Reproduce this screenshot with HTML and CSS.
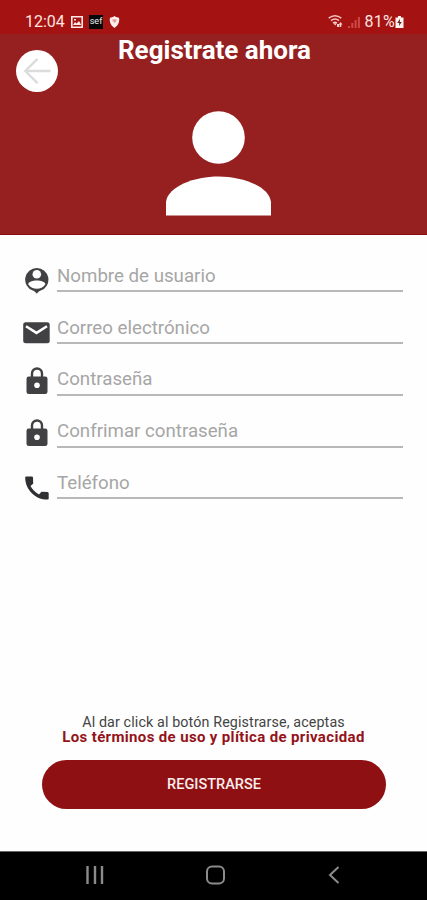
FILE: index.html
```html
<!DOCTYPE html>
<html lang="es">
<head>
<meta charset="utf-8">
<title>Registrate ahora</title>
<link rel="stylesheet" href="styles.css">
</head>
<body>
<div class="screen">
  <div class="status">
    <span class="clock">12:04</span>
    <svg class="s-img" width="12" height="12" viewBox="0 0 12 12"><path fill="none" stroke="#ffe9e6" stroke-width="1.6" d="M.8.8h10.4v10.4H.8z"/><path fill="#ffe9e6" d="M2 9l2-3 1.5 1.5L8 5l2.2 4zM3 3h2v1.6H3z"/></svg>
    <span class="s-app">sef</span>
    <svg class="s-shield" width="11" height="12" viewBox="0 0 11 12"><path fill="#ffeeeb" d="M5.500 0L7 1l3 .8c.8 3-.2 7.500-4.500 10.200C1.200 9.300.2 4.800 1 1.800L4 1z"/><path fill="#a51212" d="M3.600 3.200h3.800v2L5.500 7 3.600 5.200z" opacity=".35"/></svg>
    <span class="gap"></span>
    <svg class="s-wifi" width="16" height="13" viewBox="0 0 16 13"><g fill="none" stroke="#f5c9c4" stroke-width="1.500"><path d="M.7 3.200Q7 -1.500 13.300 3.200M3 5.600q4-3 8 0M5 8q2-1.600 4 0"/></g><path fill="#f5d5d0" d="M5.300 8.300h3.500L7.200 10.500zM9 9h2.200v3H9zM12.500 7l2 2.500h-1.200V12h-1.500V9.500h-1z"/></svg>
    <svg class="s-signal" width="12" height="12" viewBox="0 0 12 12"><path fill="#cb4a45" d="M0 10h2v2H0zM3.300 7h2v5h-2zM6.600 4h2v8h-2zM9.900 1h2v11h-2z"/></svg>
    <span class="pct">81%</span>
    <svg class="s-bat" width="9" height="12" viewBox="0 0 9 12"><path fill="#fff1ee" d="M3 0h3v1.500h2.500V12H.5V1.500H3z"/><path fill="#5d2525" d="M5 2.800L2.200 7h2L4 10l2.800-4h-2z"/></svg>
  </div>
  <header class="head">
    <div class="back"><svg width="42" height="42" viewBox="0 0 42 42"><path fill="none" stroke="#dcdcdc" stroke-width="2.400" d="M34.500 21H9.500M21.500 8.800L9.300 21l12.200 12.200"/></svg></div>
    <h1>Registrate ahora</h1>
    <svg class="avatar" width="105" height="105" viewBox="0 0 105 105"><circle cx="52.500" cy="26.500" r="26.300" fill="#fff"/><path fill="#fff" d="M0 104.500V91C2 75 29 65.500 52.500 65.500S103 75 105 91v13.500z"/></svg>
  </header>
  <main class="form">
    <div class="row"><div class="icon"><svg width="26" height="28" viewBox="0 0 26 28"><path fill="#414143" d="M12.800 1a11.600 11.600 0 0 0-4 22.500c1.700.7 2.500 1.500 4 3.300 1.500-1.800 2.300-2.600 4-3.300A11.600 11.600 0 0 0 12.800 1z"/><circle cx="12.800" cy="7.300" r="4.300" fill="#fff"/><path fill="#fff" d="M4.200 17.200c.8-5 16.400-5 17.200 0-3.800 6-13.400 6-17.200 0z"/></svg></div><div class="field">Nombre de usuario</div></div>
    <div class="row"><div class="icon mail"><svg width="27" height="22" viewBox="0 0 27 22"><rect width="26.500" height="21" x=".2" y=".2" rx="2.500" fill="#414143"/><path d="M3 4.300l10.500 6.600L24 4.300" fill="none" stroke="#fff" stroke-width="2.500"/></svg></div><div class="field">Correo electrónico</div></div>
    <div class="row"><div class="icon lock"><svg width="22" height="28" viewBox="0 0 22 28"><path d="M6 11V6.500a5 5 0 0 1 10 0V11" fill="none" stroke="#414143" stroke-width="2.400"/><rect x=".5" y="9.500" width="21" height="17.500" rx="2.300" fill="#414143"/><circle cx="11" cy="18.300" r="2.800" fill="#fff"/></svg></div><div class="field">Contraseña</div></div>
    <div class="row"><div class="icon lock"><svg width="22" height="28" viewBox="0 0 22 28"><path d="M6 11V6.500a5 5 0 0 1 10 0V11" fill="none" stroke="#414143" stroke-width="2.400"/><rect x=".5" y="9.500" width="21" height="17.500" rx="2.300" fill="#414143"/><circle cx="11" cy="18.300" r="2.800" fill="#fff"/></svg></div><div class="field">Confrimar contraseña</div></div>
    <div class="row"><div class="icon phone"><svg width="24" height="24" viewBox="0 0 24 24"><path fill="#303032" d="M1.300.5h5.500c.7 0 1.100.4 1.200 1.100l.2 5.300c0 .5-.1.900-.4 1.200L5.500 10c1.800 3.700 4.800 6.500 8.500 8.400l2-2.200c.3-.3.700-.4 1.200-.4l5.400.3c.7.1 1.100.5 1.100 1.200v5.100c0 .7-.5 1.200-1.200 1.200C10 23.600.3 13.500.2 1.700.2 1 .6.5 1.300.5z"/></svg></div><div class="field">Teléfono</div></div>
  </main>
  <footer class="foot">
    <p class="note">Al dar click al botón Registrarse, aceptas</p>
    <p class="terms">Los términos de uso y plítica de privacidad</p>
    <div class="btn">REGISTRARSE</div>
  </footer>
  <nav class="nav">
    <svg width="19" height="18" viewBox="0 0 19 18"><path stroke="#8b8b8b" stroke-width="2.400" d="M2.500 0v18M10 0v18M17 0v18"/></svg>
    <svg width="20" height="20" viewBox="0 0 20 20"><rect x="1" y="1.500" width="17" height="17" rx="5" fill="none" stroke="#8b8b8b" stroke-width="2"/></svg>
    <svg width="12" height="18" viewBox="0 0 12 18"><path d="M10.500 1L2 9l8.500 8" fill="none" stroke="#8b8b8b" stroke-width="2"/></svg>
  </nav>
</div>
</body>
</html>
```
FILE: styles.css
```css
* { box-sizing: border-box; }
body { margin: 0; background: #fff; font-family: Roboto, sans-serif; }
svg { display: block; flex: none; }
p, h1 { margin: 0; white-space: nowrap; }
.screen { width: 427px; height: 900px; display: flex; flex-direction: column; overflow: hidden; background: #fefefe; }
.status { height: 34px; flex: none; background: #a51212; color: #ffe4e0; display: flex; align-items: center; padding: 9px 23px 0 25px; font-size: 16px; line-height: 18px; }
.clock { width: 46px; }
.s-app { width: 14px; height: 14px; margin: 0 0 0 6px; background: #080808; color: #eee; font-size: 9px; line-height: 13px; text-align: center; }
.s-shield { margin-left: 6px; }
.gap { flex: 1; }
.s-signal { margin: 0 4px 0 4px; }
.pct { letter-spacing: .3px; }
.s-bat { margin-left: 0; }
.head { height: 200.5px; flex: none; background: #962020; border-bottom: 1px solid #8a0c10; color: #fff; display: grid; grid-template-columns: 58px 1fr 58px; grid-template-rows: 77px 1fr; }
.back { width: 42px; height: 42px; margin: 16px 0 0 16px; border-radius: 50%; background: #fff; }
h1 { text-align: center; font-size: 26px; line-height: 32px; font-weight: 700; padding-left: 2px; }
.avatar { grid-column: 1 / 4; justify-self: center; margin-left: 10px; }
.form { flex: 1; padding: 6px 24px 0 23px; }
.row { height: 51.8px; display: flex; }
.icon { width: 34px; flex: none; padding: 26px 0 0 1px; }
.mail { padding: 29.5px 0 0 0; }
.lock { padding: 23px 0 0 3px; }
.phone { padding: 28px 0 0 2px; }
.field { flex: 1; border-bottom: 2px solid #b8b8b8; color: #a6a6a6; font-size: 18.7px; line-height: 22px; padding-top: 24.3px; white-space: nowrap; }
.foot { height: 138px; flex: none; text-align: center; }
.note { font-size: 14.3px; line-height: 15px; padding-top: 2px; letter-spacing: .12px; color: #444; }
.terms { font-size: 15px; line-height: 15px; letter-spacing: .35px; font-weight: 700; color: #941319; }
.btn { height: 49.5px; margin: 14.5px 41px 0 42px; border-radius: 25px; background: #8f1012; color: #fbeeee; font-size: 14.5px; line-height: 50px; padding-top: .5px; font-weight: 500; }
.nav { height: 49px; flex: none; background: #000; border-top: 1px solid #666; display: flex; justify-content: space-between; align-items: center; padding: 0 87px 2px 85px; }
```
